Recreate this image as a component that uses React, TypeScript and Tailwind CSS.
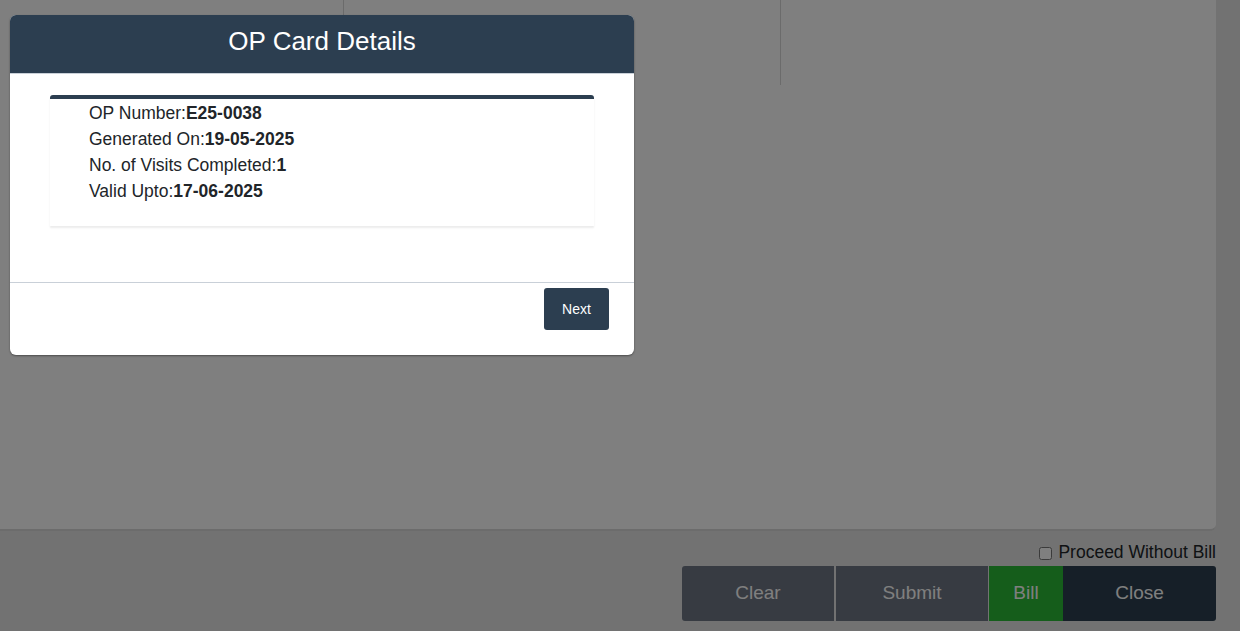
import React from "react";

const details = [
  { label: "OP Number:", value: "E25-0038" },
  { label: "Generated On:", value: "19-05-2025" },
  { label: "No. of Visits Completed:", value: "1" },
  { label: "Valid Upto:", value: "17-06-2025" },
];

export default function App() {
  return (
    <div
      className="relative w-[1240px] h-[631px] overflow-hidden bg-[#e4e4e4]"
      style={{ fontFamily: '"Liberation Sans", Arial, sans-serif' }}
    >
      {/* page underneath */}
      <div className="flex flex-col">
        <div className="w-[1216px] h-[531px] bg-white rounded-br-md border-b-2 border-[#d8d8d8] flex">
          <div className="w-[344px] h-[85px] border-r border-[#d6d6d6]" />
          <div className="w-[437px] h-[85px] border-r border-[#d6d6d6]" />
        </div>
        <div className="w-[1216px] flex justify-end items-center mt-[13px] h-[18px] gap-[6px]">
          <input type="checkbox" className="w-[13px] h-[13px]" />
          <span className="text-[17.5px] text-[#212529] leading-none">Proceed Without Bill</span>
        </div>
        <div className="w-[1216px] flex justify-end mt-[4px]">
          <div className="flex h-[55px] text-[19px] text-white">
            <button className="w-[152px] bg-[#6e7684] rounded-l-[3px] mr-[2px]">Clear</button>
            <button className="w-[152px] bg-[#6e7684] mr-[1px]">Submit</button>
            <button className="w-[74px] bg-[#2bba37]">Bill</button>
            <button className="w-[153px] bg-[#2c3e50] rounded-r-[3px]">Close</button>
          </div>
        </div>
      </div>

      {/* backdrop */}
      <div className="absolute inset-0 bg-black/50" />

      {/* modal */}
      <div className="absolute left-[10px] top-[15px] w-[624px] h-[340px] bg-white rounded-[6px] overflow-hidden flex flex-col shadow-[0_1px_2px_rgba(0,0,0,0.4)]">
        <div className="h-[59px] bg-[#2c3e50] flex items-center justify-center border-b border-[#c9d0d8] pb-[5px]">
          <h2 className="text-[26px] text-white">OP Card Details</h2>
        </div>
        <div className="flex-1 px-[40px] pt-[21px]">
          <div className="border-t-4 border-[#2c3e50] rounded-t-[3px] bg-white shadow-[0_2px_2px_rgba(0,0,0,0.08)] pl-[39px] pt-[1px] pb-[22px]">
            {details.map((d) => (
              <div key={d.label} className="text-[17.5px] leading-[26px] text-[#212529]">
                {d.label}
                <b>{d.value}</b>
              </div>
            ))}
          </div>
        </div>
        <div className="h-[73px] border-t border-[#c9d0d8] flex justify-end pt-[5px] pr-[25px]">
          <button className="w-[65px] h-[42px] bg-[#2c3e50] text-white text-[14px] rounded-[3px]">Next</button>
        </div>
      </div>
    </div>
  );
}
